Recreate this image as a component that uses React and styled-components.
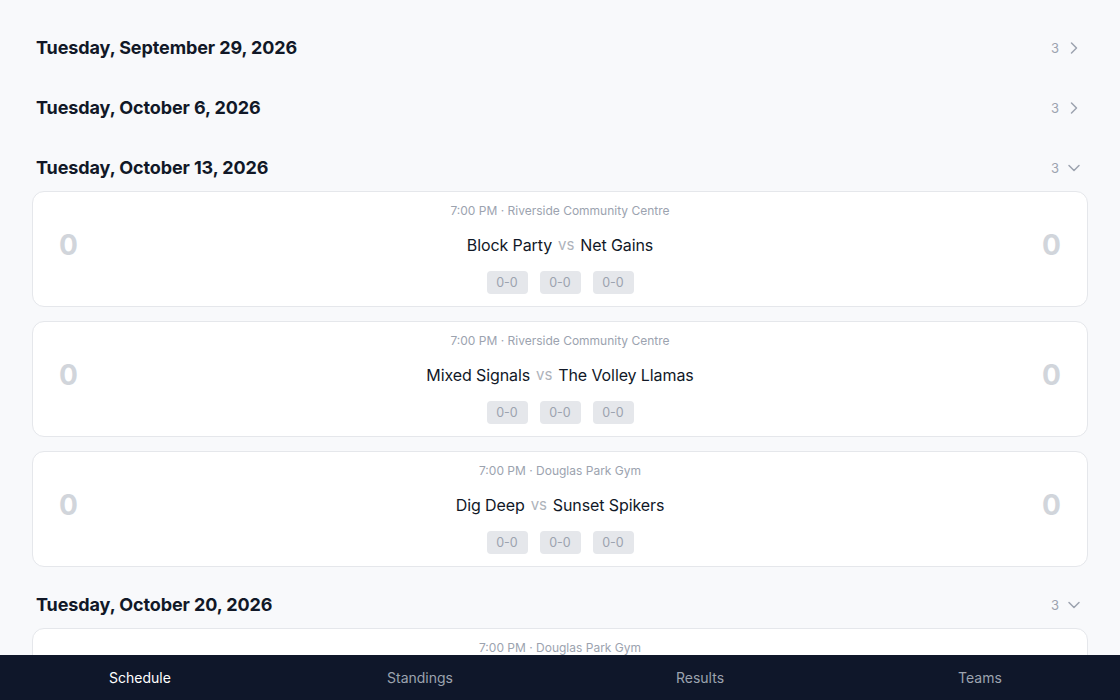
import React, { useState } from 'react';
import styled, { createGlobalStyle } from 'styled-components';

const GlobalStyle = createGlobalStyle`
  html, body {
    margin: 0;
    padding: 0;
    height: 100%;
  }
  body {
    font-family: Inter, "Noto Sans", "Liberation Sans", sans-serif;
    background: #f8f9fb;
    color: #111827;
  }
  #root {
    height: 100%;
  }
`;

const Shell = styled.div`
  height: 100vh;
  display: flex;
  flex-direction: column;
`;

const Scroller = styled.main`
  flex: 1;
  overflow: hidden;
  padding: 25px 32px 0 32px;
`;

const Section = styled.section`
  margin-bottom: 14px;
`;

const DayHeader = styled.div`
  height: 46px;
  display: flex;
  align-items: center;
  justify-content: space-between;
  padding: 0 4px;
  cursor: pointer;
`;

const DayTitle = styled.h2`
  margin: 0;
  font-size: 18px;
  line-height: 24px;
  font-weight: 700;
  color: #111827;
  letter-spacing: -0.1px;
`;

const Meta = styled.div`
  display: flex;
  align-items: center;
  gap: 5px;
  color: #9ca3af;
  font-size: 13px;
`;

const Chevron = styled.svg`
  width: 20px;
  height: 20px;
  stroke: #9ca3af;
  fill: none;
  stroke-width: 1.8;
  stroke-linecap: round;
  stroke-linejoin: round;
`;

const Games = styled.div`
  display: flex;
  flex-direction: column;
  gap: 14px;
  padding: 0 0 1px;
`;

const Card = styled.div`
  height: 116px;
  box-sizing: border-box;
  background: #fff;
  border: 1px solid #e5e7eb;
  border-radius: 12px;
  padding: 10px 26px 12px;
  display: grid;
  grid-template-columns: 60px 1fr 60px;
  align-items: center;
`;

const BigScore = styled.div`
  font-size: 28px;
  line-height: 34px;
  font-weight: 700;
  color: #d1d5db;
  text-align: ${(p) => (p.$right ? 'right' : 'left')};
  padding-bottom: 6px;
`;

const Center = styled.div`
  display: flex;
  flex-direction: column;
  align-items: center;
`;

const When = styled.div`
  font-size: 12px;
  line-height: 18px;
  color: #9ca3af;
`;

const Matchup = styled.div`
  margin-top: 13px;
  height: 24px;
  font-size: 16px;
  line-height: 24px;
  letter-spacing: -0.1px;
  color: #111827;
  display: flex;
  gap: 6px;
`;

const Vs = styled.span`
  font-size: 15px;
  line-height: 24px;
  color: #aeb3bb;
`;

const Sets = styled.div`
  margin-top: 14px;
  display: flex;
  gap: 12px;
`;

const SetChip = styled.div`
  width: 41px;
  height: 23px;
  border-radius: 4px;
  background: #e5e7eb;
  color: #9ca3af;
  font-size: 12.5px;
  display: flex;
  align-items: center;
  justify-content: center;
`;

const Nav = styled.nav`
  height: 45px;
  flex-shrink: 0;
  background: #0f172a;
  display: grid;
  grid-template-columns: repeat(4, 1fr);
`;

const NavItem = styled.button`
  background: none;
  border: none;
  font-family: inherit;
  font-size: 14px;
  color: ${(p) => (p.$active ? '#ffffff' : '#9ca3af')};
  cursor: pointer;
`;

const schedule = [
  {
    date: 'Tuesday, September 29, 2026',
    count: 3,
    open: false,
    games: [],
  },
  {
    date: 'Tuesday, October 6, 2026',
    count: 3,
    open: false,
    games: [],
  },
  {
    date: 'Tuesday, October 13, 2026',
    count: 3,
    open: true,
    games: [
      { id: 1, time: '7:00 PM', venue: 'Riverside Community Centre', home: 'Block Party', away: 'Net Gains' },
      { id: 2, time: '7:00 PM', venue: 'Riverside Community Centre', home: 'Mixed Signals', away: 'The Volley Llamas' },
      { id: 3, time: '7:00 PM', venue: 'Douglas Park Gym', home: 'Dig Deep', away: 'Sunset Spikers' },
    ],
  },
  {
    date: 'Tuesday, October 20, 2026',
    count: 3,
    open: true,
    games: [
      { id: 4, time: '7:00 PM', venue: 'Douglas Park Gym', home: 'Block Party', away: 'Mixed Signals' },
    ],
  },
];

const GameCard = ({ game }) => (
  <Card>
    <BigScore>0</BigScore>
    <Center>
      <When>{game.time} · {game.venue}</When>
      <Matchup>
        <span>{game.home}</span>
        <Vs>vs</Vs>
        <span>{game.away}</span>
      </Matchup>
      <Sets>
        <SetChip>0-0</SetChip>
        <SetChip>0-0</SetChip>
        <SetChip>0-0</SetChip>
      </Sets>
    </Center>
    <BigScore $right>0</BigScore>
  </Card>
);

const App = () => {
  const [tab, setTab] = useState('Schedule');

  return (
    <Shell>
      <GlobalStyle />
      <Scroller>
        {schedule.map((day) => (
          <Section key={day.date}>
            <DayHeader>
              <DayTitle>{day.date}</DayTitle>
              <Meta>
                <span>{day.count}</span>
                <Chevron viewBox="0 0 24 24">
                  {day.open ? <path d="M6 9l6 6 6-6" /> : <path d="M9 6l6 6-6 6" />}
                </Chevron>
              </Meta>
            </DayHeader>
            {day.open && (
              <Games>
                {day.games.map((g) => (
                  <GameCard key={g.id} game={g} />
                ))}
              </Games>
            )}
          </Section>
        ))}
      </Scroller>
      <Nav>
        {['Schedule', 'Standings', 'Results', 'Teams'].map((t) => (
          <NavItem key={t} $active={tab === t} onClick={() => setTab(t)}>
            {t}
          </NavItem>
        ))}
      </Nav>
    </Shell>
  );
};

export default App;
